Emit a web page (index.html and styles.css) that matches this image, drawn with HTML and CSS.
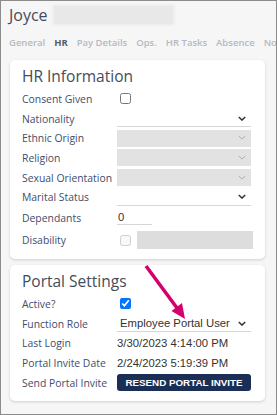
FILE: index.html
```html
<!DOCTYPE html>
<html lang="en">
  <head>
    <meta charset="utf-8" />
    <title>Employee HR</title>
    <link rel="stylesheet" href="styles.css">
  </head>
  <body>
    <div class="screen">
      <header class="header">
        <div class="name">
          <span>Joyce</span><span class="redacted"></span>
        </div>
        <nav class="tabs">
          <span>General</span>
          <span class="active">HR</span>
          <span>Pay Details</span>
          <span>Ops.</span>
          <span>HR Tasks</span>
          <span>Absence</span>
          <span>Notes</span>
        </nav>
      </header>

      <section class="card hr-card">
        <h2>HR Information</h2>
        <div class="row">
          <label>Consent Given</label>
          <div class="field"><input type="checkbox" class="check" /></div>
        </div>
        <div class="row">
          <label>Nationality</label>
          <div class="select">
            <span></span>
            <svg class="chevron" viewBox="0 0 10 6"><path d="M1 1l4 4 4-4" /></svg>
          </div>
        </div>
        <div class="row">
          <label>Ethnic Origin</label>
          <div class="select disabled">
            <span></span>
            <svg class="chevron" viewBox="0 0 10 6"><path d="M1 1l4 4 4-4" /></svg>
          </div>
        </div>
        <div class="row">
          <label>Religion</label>
          <div class="select disabled">
            <span></span>
            <svg class="chevron" viewBox="0 0 10 6"><path d="M1 1l4 4 4-4" /></svg>
          </div>
        </div>
        <div class="row">
          <label>Sexual Orientation</label>
          <div class="select disabled">
            <span></span>
            <svg class="chevron" viewBox="0 0 10 6"><path d="M1 1l4 4 4-4" /></svg>
          </div>
        </div>
        <div class="row">
          <label>Marital Status</label>
          <div class="select">
            <span></span>
            <svg class="chevron" viewBox="0 0 10 6"><path d="M1 1l4 4 4-4" /></svg>
          </div>
        </div>
        <div class="row tall">
          <label>Dependants</label>
          <div class="field"><input type="text" class="number" value="0" /></div>
        </div>
        <div class="row tall">
          <label>Disability</label>
          <div class="field">
            <input type="checkbox" class="check" disabled />
            <span class="grey-box"></span>
          </div>
        </div>
      </section>

      <section class="card portal-card">
        <h2>Portal Settings</h2>
        <div class="row">
          <label>Active?</label>
          <div class="field"><input type="checkbox" class="check" checked /></div>
        </div>
        <div class="row">
          <label>Function Role</label>
          <div class="select">
            <span class="value">Employee Portal User</span>
            <svg class="chevron" viewBox="0 0 10 6"><path d="M1 1l4 4 4-4" /></svg>
          </div>
        </div>
        <div class="row">
          <label>Last Login</label>
          <div class="value">3/30/2023 4:14:00 PM</div>
        </div>
        <div class="row">
          <label>Portal Invite Date</label>
          <div class="value">2/24/2023 5:19:39 PM</div>
        </div>
        <div class="row">
          <label>Send Portal Invite</label>
          <button class="resend">RESEND PORTAL INVITE</button>
        </div>
      </section>

      <svg class="pointer" width="277" height="415" viewBox="0 0 277 415">
        <line x1="146" y1="266" x2="177" y2="308" />
        <polygon points="185,319 171.5,311 182,303" />
      </svg>
    </div>
  </body>
</html>
```

FILE: styles.css
```css
html,
body {
  margin: 0;
  padding: 0;
}

body {
  font-family: "Open Sans", "Noto Sans", sans-serif;
  background-color: #ffffff;
}

.screen {
  position: relative;
  width: 277px;
  height: 415px;
  box-sizing: border-box;
  border: 1px solid #8c8c8c;
  background-color: #f6f6f6;
  overflow: hidden;
}

.header {
  padding: 3px 0 0 8px;
}

.name {
  display: flex;
  align-items: center;
  gap: 5px;
  height: 22px;
  font-size: 16px;
  color: #434c5a;
}

.redacted {
  width: 121px;
  height: 20px;
  background-color: #e8e8e8;
  filter: blur(1px);
}

.tabs {
  display: flex;
  gap: 9px;
  margin-top: 10px;
  font-size: 9.5px;
  font-weight: 600;
  color: #b4b9c2;
  white-space: nowrap;
}

.tabs .active {
  color: #545d6a;
  font-weight: 700;
}

.card {
  margin: 0 11px 0 9px;
  padding: 4px 14px 8px 12px;
  background-color: #ffffff;
  border-radius: 5px;
  box-shadow: 0 1px 3px rgba(0, 0, 0, 0.16);
}

.hr-card {
  margin-top: 11px;
}

.portal-card {
  margin-top: 6px;
}

.card h2 {
  margin: 0 0 1px;
  font-size: 15.5px;
  font-weight: 400;
  line-height: 24px;
  color: #434c5a;
}

.row {
  display: grid;
  grid-template-columns: 95px 1fr;
  align-items: center;
  height: 19.7px;
}

.row.tall {
  height: 22px;
}

.row label {
  font-size: 10.4px;
  color: #3f4d6b;
  white-space: nowrap;
}

.field {
  display: flex;
  align-items: center;
  gap: 6px;
}

.check {
  width: 11px;
  height: 11px;
  margin: 0 0 0 3px;
}

.select {
  display: flex;
  align-items: center;
  justify-content: space-between;
  height: 16px;
  padding: 0 5px 0 3px;
  border-bottom: 1px solid #d6d6d6;
}

.select.disabled {
  background-color: #e2e2e2;
  border-bottom-color: #e2e2e2;
}

.chevron {
  width: 8px;
  height: 5px;
  fill: none;
  stroke: #333333;
  stroke-width: 1.8;
}

.disabled .chevron {
  stroke: #a9a9a9;
  stroke-width: 1.2;
}

.value {
  font-family: "Liberation Sans", Arial, sans-serif;
  font-size: 11.3px;
  color: #333333;
}

.number {
  width: 34px;
  padding: 0 0 1px 1px;
  border: none;
  border-bottom: 1px solid #d6d6d6;
  font-family: "Liberation Sans", Arial, sans-serif;
  font-size: 11.3px;
  color: #333333;
  outline: none;
}

.grey-box {
  width: 116px;
  height: 18px;
  background-color: #dddddd;
}

.resend {
  height: 17px;
  padding: 0;
  border: none;
  border-radius: 3px;
  background-color: #1b2e55;
  color: #ffffff;
  font-family: "Liberation Sans", Arial, sans-serif;
  font-size: 9.8px;
  font-weight: 700;
}

.pointer {
  position: absolute;
  top: -1px;
  left: -1px;
  pointer-events: none;
}

.pointer line {
  stroke: #d4006d;
  stroke-width: 3.5;
}

.pointer polygon {
  fill: #d4006d;
}
```
